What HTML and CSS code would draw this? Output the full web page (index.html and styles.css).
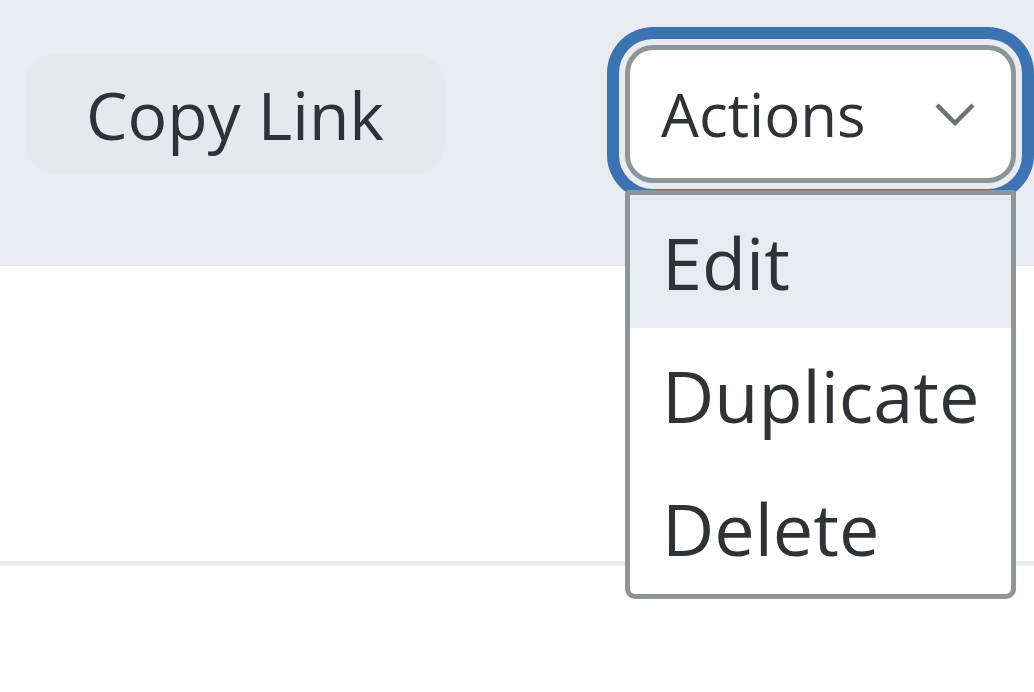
FILE: index.html
```html
<!DOCTYPE html>
<html>
<head>
<meta charset="utf-8">
<link rel="stylesheet" href="styles.css">
</head>
<body>
<div class="page">
  <div class="toolbar">
    <button class="copy-btn">Copy Link</button>
    <div class="select-wrap">
      <div class="select">
        <span class="select-label">Actions</span>
        <svg class="chevron" width="42" height="26" viewBox="0 0 42 26"><path d="M3 4 L21 22 L39 4" fill="none" stroke="#697177" stroke-width="4.5"/></svg>
      </div>
      <ul class="menu">
        <li class="item active">Edit</li>
        <li class="item">Duplicate</li>
        <li class="item">Delete</li>
      </ul>
    </div>
  </div>
  <div class="content"></div>
  <div class="divider"></div>
  <div class="rest"></div>
</div>
</body>
</html>
```
FILE: styles.css
```css
html, body {
  margin: 0;
  padding: 0;
  background: #ffffff;
  font-family: "Open Sans", "Noto Sans", sans-serif;
  color: #2f3337;
}
.page {
  min-height: 692px;
  display: flex;
  flex-direction: column;
}
.toolbar {
  height: 266px;
  flex: none;
  background: #e8ebf0;
  display: flex;
  justify-content: space-between;
  align-items: flex-start;
  padding: 0 18px 0 25px;
  box-sizing: border-box;
  position: relative;
  z-index: 2;
}
.copy-btn {
  margin-top: 54px;
  width: 420px;
  height: 120px;
  border: none;
  border-radius: 30px;
  background: #e7e8eb;
  font-family: inherit;
  font-size: 66px;
  color: #2f3337;
  padding: 0;
}
.select-wrap {
  position: relative;
  margin-top: 45px;
}
.select {
  width: 391px;
  height: 138px;
  box-sizing: border-box;
  border: 5px solid #8c9598;
  border-radius: 28px;
  background: #ffffff;
  box-shadow: 0 0 0 6px #e8ebf0, 0 0 0 18px #3e73b2;
  display: flex;
  align-items: center;
  justify-content: space-between;
  padding: 0 35px 0 31px;
}
.select-label {
  font-size: 60px;
}
.chevron {
  display: block;
}
.menu {
  position: absolute;
  top: 145px;
  left: 0;
  width: 391px;
  box-sizing: border-box;
  margin: 0;
  padding: 0;
  list-style: none;
  background: #ffffff;
  border: 5px solid #8c9598;
  border-radius: 3px 3px 10px 10px;
  overflow: hidden;
}
.item {
  height: 133px;
  display: flex;
  align-items: center;
  padding-left: 32px;
  font-size: 72px;
}
.item.active {
  background: #e8ebf0;
}
.content {
  height: 295px;
  flex: none;
}
.divider {
  height: 5px;
  flex: none;
  background: #e9eaee;
}
.rest {
  flex: 1;
}
```
